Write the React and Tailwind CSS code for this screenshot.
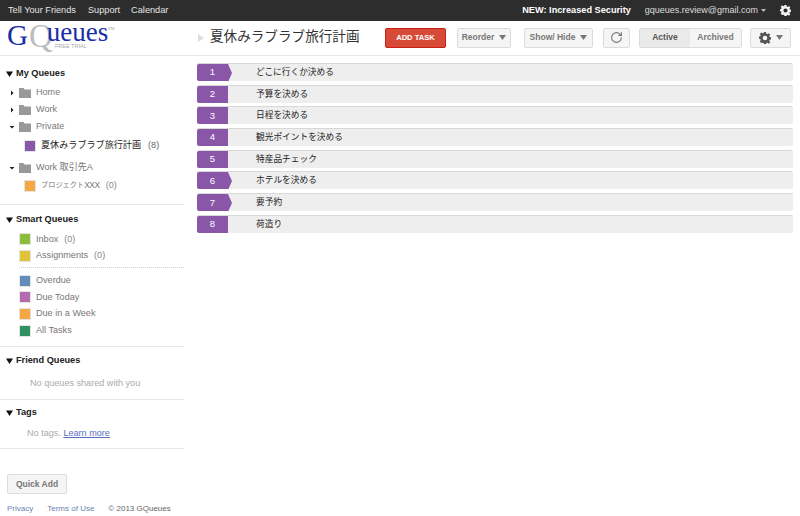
import React from 'react';
import { RotateCw } from 'lucide-react';

const font = { sans: 'font-["Liberation_Sans","Noto_Sans_CJK_JP",sans-serif]' };

const tasks = [
  { n: 1, title: 'どこに行くか決める', arrow: true },
  { n: 2, title: '予算を決める' },
  { n: 3, title: '日程を決める' },
  { n: 4, title: '観光ポイントを決める' },
  { n: 5, title: '特産品チェック' },
  { n: 6, title: 'ホテルを決める', arrow: true },
  { n: 7, title: '要予約', arrow: true },
  { n: 8, title: '荷造り' },
];

function Caret({ open, className = '' }) {
  return (
    <svg width="6" height="6" viewBox="0 0 6 6" className={className}>
      <path d={open ? 'M0.5 2h5L3 4.5z' : 'M2 0.5v5L4.5 3z'} fill="#222" />
    </svg>
  );
}

function Folder() {
  return (
    <svg width="12" height="10" viewBox="0 0 12 10">
      <path d="M0 0h4.5l1 1.5H12V10H0z" fill="#999" />
    </svg>
  );
}

function Gear({ size = 14, color = '#555' }) {
  return (
    <svg width={size} height={size} viewBox="0 0 16 16">
      <path
        fill={color}
        fillRule="evenodd"
        d="M6.6 0h2.8l.4 2.2 1.3.6L13 1.5l2 2-1.3 1.9.6 1.3 2.2.4v2.8l-2.2.4-.6 1.3 1.3 1.9-2 2-1.9-1.3-1.3.6-.4 2.2H6.6l-.4-2.2-1.3-.6L3 14.5l-2-2 1.3-1.9-.6-1.3L-.5 8.9V6.1l2.2-.4.6-1.3L1 2.5l2-2 1.9 1.3 1.3-.6zM8 5a3 3 0 1 0 0 6 3 3 0 0 0 0-6z"
      />
    </svg>
  );
}

function SectionTitle({ children }) {
  return (
    <div className="flex items-center h-[14px] pl-[5px] text-[9.2px] font-bold text-[#222]">
      <svg width="10" height="7" viewBox="0 0 10 7" className="mr-[1px]">
        <path d="M1 0.5h7L4.5 6z" fill="#111" />
      </svg>
      {children}
    </div>
  );
}

function Swatch({ color }) {
  return <span className={`block w-[12px] h-[12px] border border-[#e4e4e4] ${color}`} />;
}

function SmartRow({ color, label, count }) {
  return (
    <div className="flex items-center h-[16.7px] pl-[19px] text-[9.1px] text-[#777]">
      <Swatch color={color} />
      <span className="ml-[5px]">{label}</span>
      {count !== undefined && <span className="ml-[6px] text-[#888]">({count})</span>}
    </div>
  );
}

function FolderRow({ open, label }) {
  return (
    <div className="flex items-center h-[17px] pl-[9px] text-[9.1px] text-[#777]">
      <Caret open={open} className="mr-[4px]" />
      <Folder />
      <span className="ml-[5px]">{label}</span>
    </div>
  );
}

function GrayButton({ children, className = '' }) {
  return (
    <div className={`flex items-center justify-center h-[20px] border border-[#dcdcdc] rounded-[2px] bg-[#f5f5f5] text-[8.5px] font-bold text-[#777] ${className}`}>
      {children}
    </div>
  );
}

function TinyArrow() {
  return (
    <svg width="7" height="5" viewBox="0 0 7 5" className="ml-[5px]">
      <path d="M0 0h7L3.5 5z" fill="#777" />
    </svg>
  );
}

function TaskRow({ n, title, arrow }) {
  return (
    <div className="flex items-center h-[18px] mb-[3.7px] bg-[#eeeeee] border-t border-[#d8d8d8] rounded-[2px]">
      <div className="flex items-center w-[59px] h-full shrink-0">
        <div className="flex items-center justify-center w-[31px] h-full bg-[#8a56a8] text-white text-[9.5px] rounded-l-[2px]">
          {n}
        </div>
        {arrow && (
          <svg width="4" height="18" viewBox="0 0 4 18" className="shrink-0">
            <path d="M0 0l4 9-4 9z" fill="#8a56a8" />
          </svg>
        )}
      </div>
      <span className="text-[8.7px] text-[#222]">{title}</span>
    </div>
  );
}

export default function App() {
  return (
    <div className={`w-[800px] h-[516px] overflow-hidden bg-white flex flex-col ${font.sans}`}>
      {/* top bar */}
      <div className="flex items-center h-[21px] shrink-0 bg-[#2d2d2d] text-[9.2px] text-[#e4e4e4] pl-[8px] pr-[9px]">
        <span>Tell Your Friends</span>
        <span className="ml-[12px]">Support</span>
        <span className="ml-[11px]">Calendar</span>
        <span className="ml-auto font-bold text-white">NEW: Increased Security</span>
        <span className="ml-[14px] text-[9px] text-[#ddd]">gqueues.review@gmail.com</span>
        <svg width="5" height="3" viewBox="0 0 5 3" className="ml-[3px]">
          <path d="M0 0h5L2.5 3z" fill="#bbb" />
        </svg>
        <span className="ml-[14px]">
          <Gear size={11} color="#f2f2f2" />
        </span>
      </div>

      {/* header */}
      <div className="flex h-[35px] shrink-0 border-b border-[#e8e8e8]">
        <div className="relative w-[198px] shrink-0 pl-[7px] font-['Liberation_Serif',serif] text-[#1a2ea8] leading-none">
          <div className="flex items-baseline -mt-[3px]">
            <span className="text-[29px]">G</span>
            <span className="relative top-[2px] text-[33px] text-[#bcbcbc] ml-[1px]">Q</span>
            <span className="relative -top-[4px] text-[27px] -ml-[6px]">ueues</span>
            <span className="text-[4px] text-[#999] self-start mt-[9px]">TM</span>
          </div>
          <span className="absolute left-[55px] top-[23px] font-['Liberation_Sans',sans-serif] text-[5.5px] text-[#aaa]">FREE TRIAL</span>
        </div>
        <div className="flex items-center flex-1 pb-[1px]">
          <svg width="6" height="8" viewBox="0 0 6 8" className="mr-[6px]">
            <path d="M0 0l6 4-6 4z" fill="#ddd" />
          </svg>
          <span className="w-[175px] text-[13.6px] text-[#333]">夏休みラブラブ旅行計画</span>
          <div className="flex items-center justify-center w-[61px] h-[20px] border border-[#c92010] rounded-[2px] bg-[#d84a38] text-white text-[7.6px] font-bold">
            ADD TASK
          </div>
          <GrayButton className="w-[54px] ml-[11px]">
            Reorder<TinyArrow />
          </GrayButton>
          <GrayButton className="w-[69px] ml-[13px]">
            Show/ Hide<TinyArrow />
          </GrayButton>
          <GrayButton className="w-[27px] ml-[10px]">
            <RotateCw size={13} color="#777" strokeWidth={2} />
          </GrayButton>
          <div className="flex ml-[9px] h-[20px] border border-[#dcdcdc] rounded-[2px] text-[8.5px] font-bold">
            <div className="flex items-center justify-center w-[50px] bg-[#eaeaea] text-[#555]">Active</div>
            <div className="flex items-center justify-center w-[51px] bg-[#f5f5f5] text-[#777]">Archived</div>
          </div>
          <GrayButton className="w-[41px] ml-[8px]">
            <Gear size={12} color="#555" />
            <TinyArrow />
          </GrayButton>
        </div>
      </div>

      <div className="flex flex-1 min-h-0">
        {/* sidebar */}
        <div className="flex flex-col w-[184px] shrink-0 mr-[13px]">
          <div className="pt-[11px] pb-[9px] border-b border-[#e8e8e8]">
            <SectionTitle>My Queues</SectionTitle>
            <div className="mt-[3px]">
              <FolderRow label="Home" />
              <FolderRow label="Work" />
              <FolderRow open label="Private" />
              <div className="flex items-center h-[19px] mt-[1px] pl-[24px] text-[9.1px] text-[#222]">
                <Swatch color="bg-[#8a56a8]" />
                <span className="ml-[5px]">夏休みラブラブ旅行計画</span>
                <span className="ml-[7px] text-[#666]">(8)</span>
              </div>
              <div className="mt-[4px]">
                <FolderRow open label="Work 取引先A" />
              </div>
              <div className="flex items-center h-[19px] pl-[24px] text-[9.1px] text-[#777]">
                <Swatch color="bg-[#f4a742]" />
                <span className="ml-[5px] text-[7.2px]">プロジェクト</span>
                <span className="text-[8.5px] tracking-[-0.5px]">XXX</span>
                <span className="ml-[6px] text-[#888]">(0)</span>
              </div>
            </div>
          </div>

          <div className="pt-[8px] pb-[7px] border-b border-[#e8e8e8]">
            <SectionTitle>Smart Queues</SectionTitle>
            <div className="mt-[4px]">
              <SmartRow color="bg-[#8cbd3a]" label="Inbox" count={0} />
              <SmartRow color="bg-[#e2c13b]" label="Assignments" count={0} />
            </div>
            <div className="mt-[3px] mb-[4px] ml-[19px] border-t border-dotted border-[#cfcfcf]" />
            <SmartRow color="bg-[#648cb8]" label="Overdue" />
            <SmartRow color="bg-[#b56bb0]" label="Due Today" />
            <SmartRow color="bg-[#f4a742]" label="Due in a Week" />
            <SmartRow color="bg-[#2f9160]" label="All Tasks" />
          </div>

          <div className="pt-[7px] pb-[10px] border-b border-[#e8e8e8]">
            <SectionTitle>Friend Queues</SectionTitle>
            <div className="mt-[9px] pl-[30px] text-[9.1px] leading-[12px] text-[#aaa]">No queues shared with you</div>
          </div>

          <div className="pt-[6px] pb-[9px] border-b border-[#e8e8e8]">
            <SectionTitle>Tags</SectionTitle>
            <div className="mt-[7px] pl-[27px] text-[9.1px] leading-[12px] text-[#aaa]">
              No tags. <span className="text-[#5a6fc0] underline">Learn more</span>
            </div>
          </div>

          <div className="mt-auto pb-[2px]">
            <GrayButton className="w-[60px] ml-[7px]">Quick Add</GrayButton>
            <div className="flex mt-[9px] pl-[7px] text-[8px] leading-[11px] text-[#6d7fb5]">
              <span>Privacy</span>
              <span className="ml-[14px]">Terms of Use</span>
              <span className="ml-[14px] text-[#666]">© 2013 GQueues</span>
            </div>
          </div>
        </div>

        {/* tasks */}
        <div className="flex-1 pt-[7px] pr-[7px]">
          {tasks.map((t) => (
            <TaskRow key={t.n} {...t} />
          ))}
        </div>
      </div>
    </div>
  );
}
